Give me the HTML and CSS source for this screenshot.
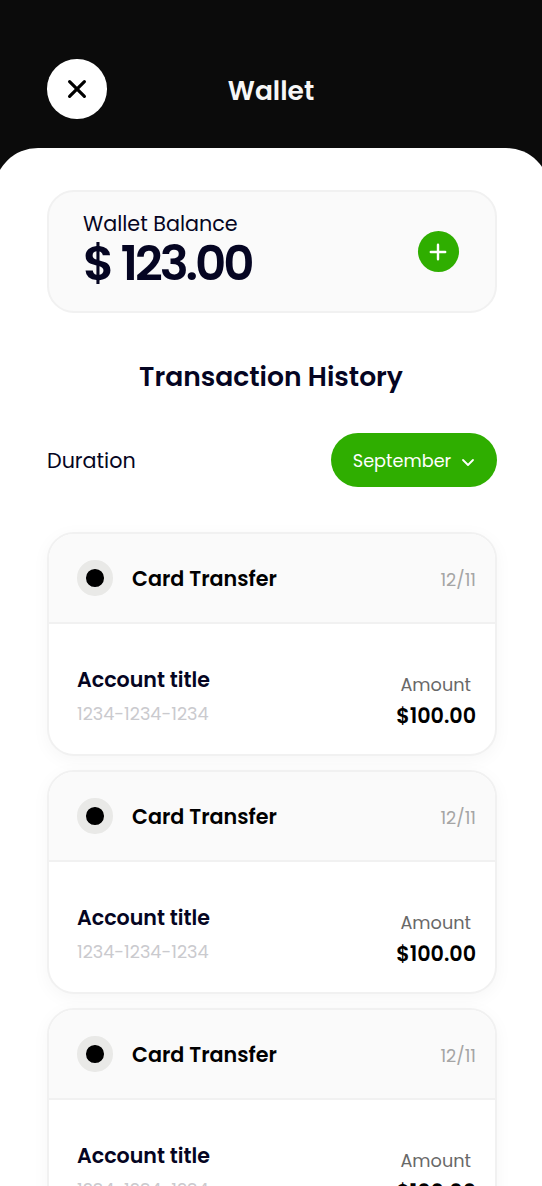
FILE: index.html
```html
<!DOCTYPE html>
<html lang="en">
<head>
<meta charset="utf-8">
<title>Wallet</title>
<link rel="stylesheet" href="styles.css">
</head>
<body>
<div class="screen">
  <header class="topbar">
    <button class="close" aria-label="Close">
      <svg width="20" height="20" viewBox="0 0 20 20" fill="none" stroke="#000" stroke-width="3.2" stroke-linecap="round"><path d="M2.6 2.6 17.4 17.4M17.4 2.6 2.6 17.4"/></svg>
    </button>
    <h1 class="title"><span>Wallet</span></h1>
  </header>
  <main class="sheet">
    <section class="balance">
      <div>
        <div class="balance-label"><span>Wallet Balance</span></div>
        <div class="balance-value"><span class="currency">$</span><span>123.00</span></div>
      </div>
      <button class="add" aria-label="Add funds">
        <svg width="18" height="18" viewBox="0 0 18 18" fill="none" stroke="#fff" stroke-width="2.4" stroke-linecap="round"><path d="M9 1.8V16.2M1.8 9H16.2"/></svg>
      </button>
    </section>
    <h2 class="section-title"><span>Transaction History</span></h2>
    <div class="filter">
      <span class="filter-label">Duration</span>
      <button class="month"><span>September</span>
        <svg width="14" height="9" viewBox="0 0 14 9" fill="none" stroke="#fff" stroke-width="1.8" stroke-linecap="round" stroke-linejoin="round"><path d="M2 2 7 7 12 2"/></svg>
      </button>
    </div>
    <div class="list">
      <article class="card">
        <div class="card-head"><i class="dot"></i><span class="kind">Card Transfer</span><span class="date">12/11</span></div>
        <div class="card-body">
          <div class="account"><div class="account-title">Account title</div><div class="account-no">1234-1234-1234</div></div>
          <div class="sum"><div class="sum-label">Amount</div><div class="sum-value">$100.00</div></div>
        </div>
      </article>
      <article class="card">
        <div class="card-head"><i class="dot"></i><span class="kind">Card Transfer</span><span class="date">12/11</span></div>
        <div class="card-body">
          <div class="account"><div class="account-title">Account title</div><div class="account-no">1234-1234-1234</div></div>
          <div class="sum"><div class="sum-label">Amount</div><div class="sum-value">$100.00</div></div>
        </div>
      </article>
      <article class="card">
        <div class="card-head"><i class="dot"></i><span class="kind">Card Transfer</span><span class="date">12/11</span></div>
        <div class="card-body">
          <div class="account"><div class="account-title">Account title</div><div class="account-no">1234-1234-1234</div></div>
          <div class="sum"><div class="sum-label">Amount</div><div class="sum-value">$100.00</div></div>
        </div>
      </article>
    </div>
  </main>
</div>
</body>
</html>
```
FILE: styles.css
```css
* { box-sizing: border-box; }
body { margin: 0; background: #0b0b0b; font-family: Poppins, Inter, sans-serif; color: #050522; }
button { border: 0; padding: 0; font: inherit; display: flex; align-items: center; justify-content: center; }
h1, h2 { margin: 0; font-weight: 600; white-space: nowrap; }
.screen { width: 542px; height: 1186px; overflow: hidden; background: #0b0b0b; }

.topbar { height: 148px; padding: 59px 47px 0; display: grid; grid-template-columns: 60px 1fr 60px; }
.close { width: 59.5px; height: 59.5px; border-radius: 50%; background: #fff; }
.title { color: #f7f7f7; font-size: 26.5px; line-height: 64px; text-align: center; }

.sheet { margin: 0 -8px 0 -6px; padding: 42px 53px 0; height: 1038px; border-radius: 44px 44px 0 0; background: #fff; }
.balance { width: 450px; height: 123px; padding: 22px 36.5px 0 34px; display: flex; justify-content: space-between; border: 2px solid #f1f1f1; border-radius: 27px; background: #fafafa; }
.balance-label { font-size: 20.7px; line-height: 20px; }
.balance-value { display: flex; gap: 9px; font-size: 48.4px; line-height: 59px; font-weight: 600; letter-spacing: -3.1px; }
.add { width: 41px; height: 41px; margin-top: 17px; border-radius: 50%; background: #2fae00; }

.section-title { width: 448px; margin-top: 46px; font-size: 26.6px; line-height: 36px; text-align: center; }
.filter { width: 450px; margin-top: 38px; display: flex; align-items: center; justify-content: space-between; }
.filter-label { font-size: 20.7px; }
.month { width: 166px; height: 54px; gap: 10px; border-radius: 27px; background: #2fae00; color: #fff; font-size: 17.7px; }
.month span { padding-top: 1px; }
.month svg { margin-top: 4px; }

.list { width: 450px; margin-top: 45px; display: flex; flex-direction: column; gap: 14px; }
.card { height: 224px; border: 2px solid #f1f1f1; border-radius: 27px; background: #fff; box-shadow: 0 4px 18px rgba(0, 0, 0, .04); overflow: hidden; }
.card-head { height: 90px; padding: 0 19px 0 28px; display: flex; align-items: center; background: #fafafa; border-bottom: 2px solid #f1f1f1; }
.dot { width: 35.5px; height: 35.5px; border: 9px solid #e9e9e7; border-radius: 50%; background: #000; }
.kind { margin-left: 19.5px; color: #000; font-size: 20.7px; font-weight: 600; }
.date { margin-left: auto; padding-top: 2px; color: #a5a5a5; font-size: 17.7px; }
.card-body { padding: 44px 19px 0 28px; display: flex; justify-content: space-between; }
.account-title { font-size: 20.6px; line-height: 24px; font-weight: 600; }
.account-no { margin-top: 10px; color: #cacace; font-size: 17.7px; line-height: 24px; }
.sum { padding-top: 5px; text-align: right; }
.sum-label { padding-right: 5px; color: #686868; font-size: 17.7px; line-height: 24px; }
.sum-value { margin-top: 7px; color: #000; font-size: 20.7px; line-height: 24px; font-weight: 600; }
```
